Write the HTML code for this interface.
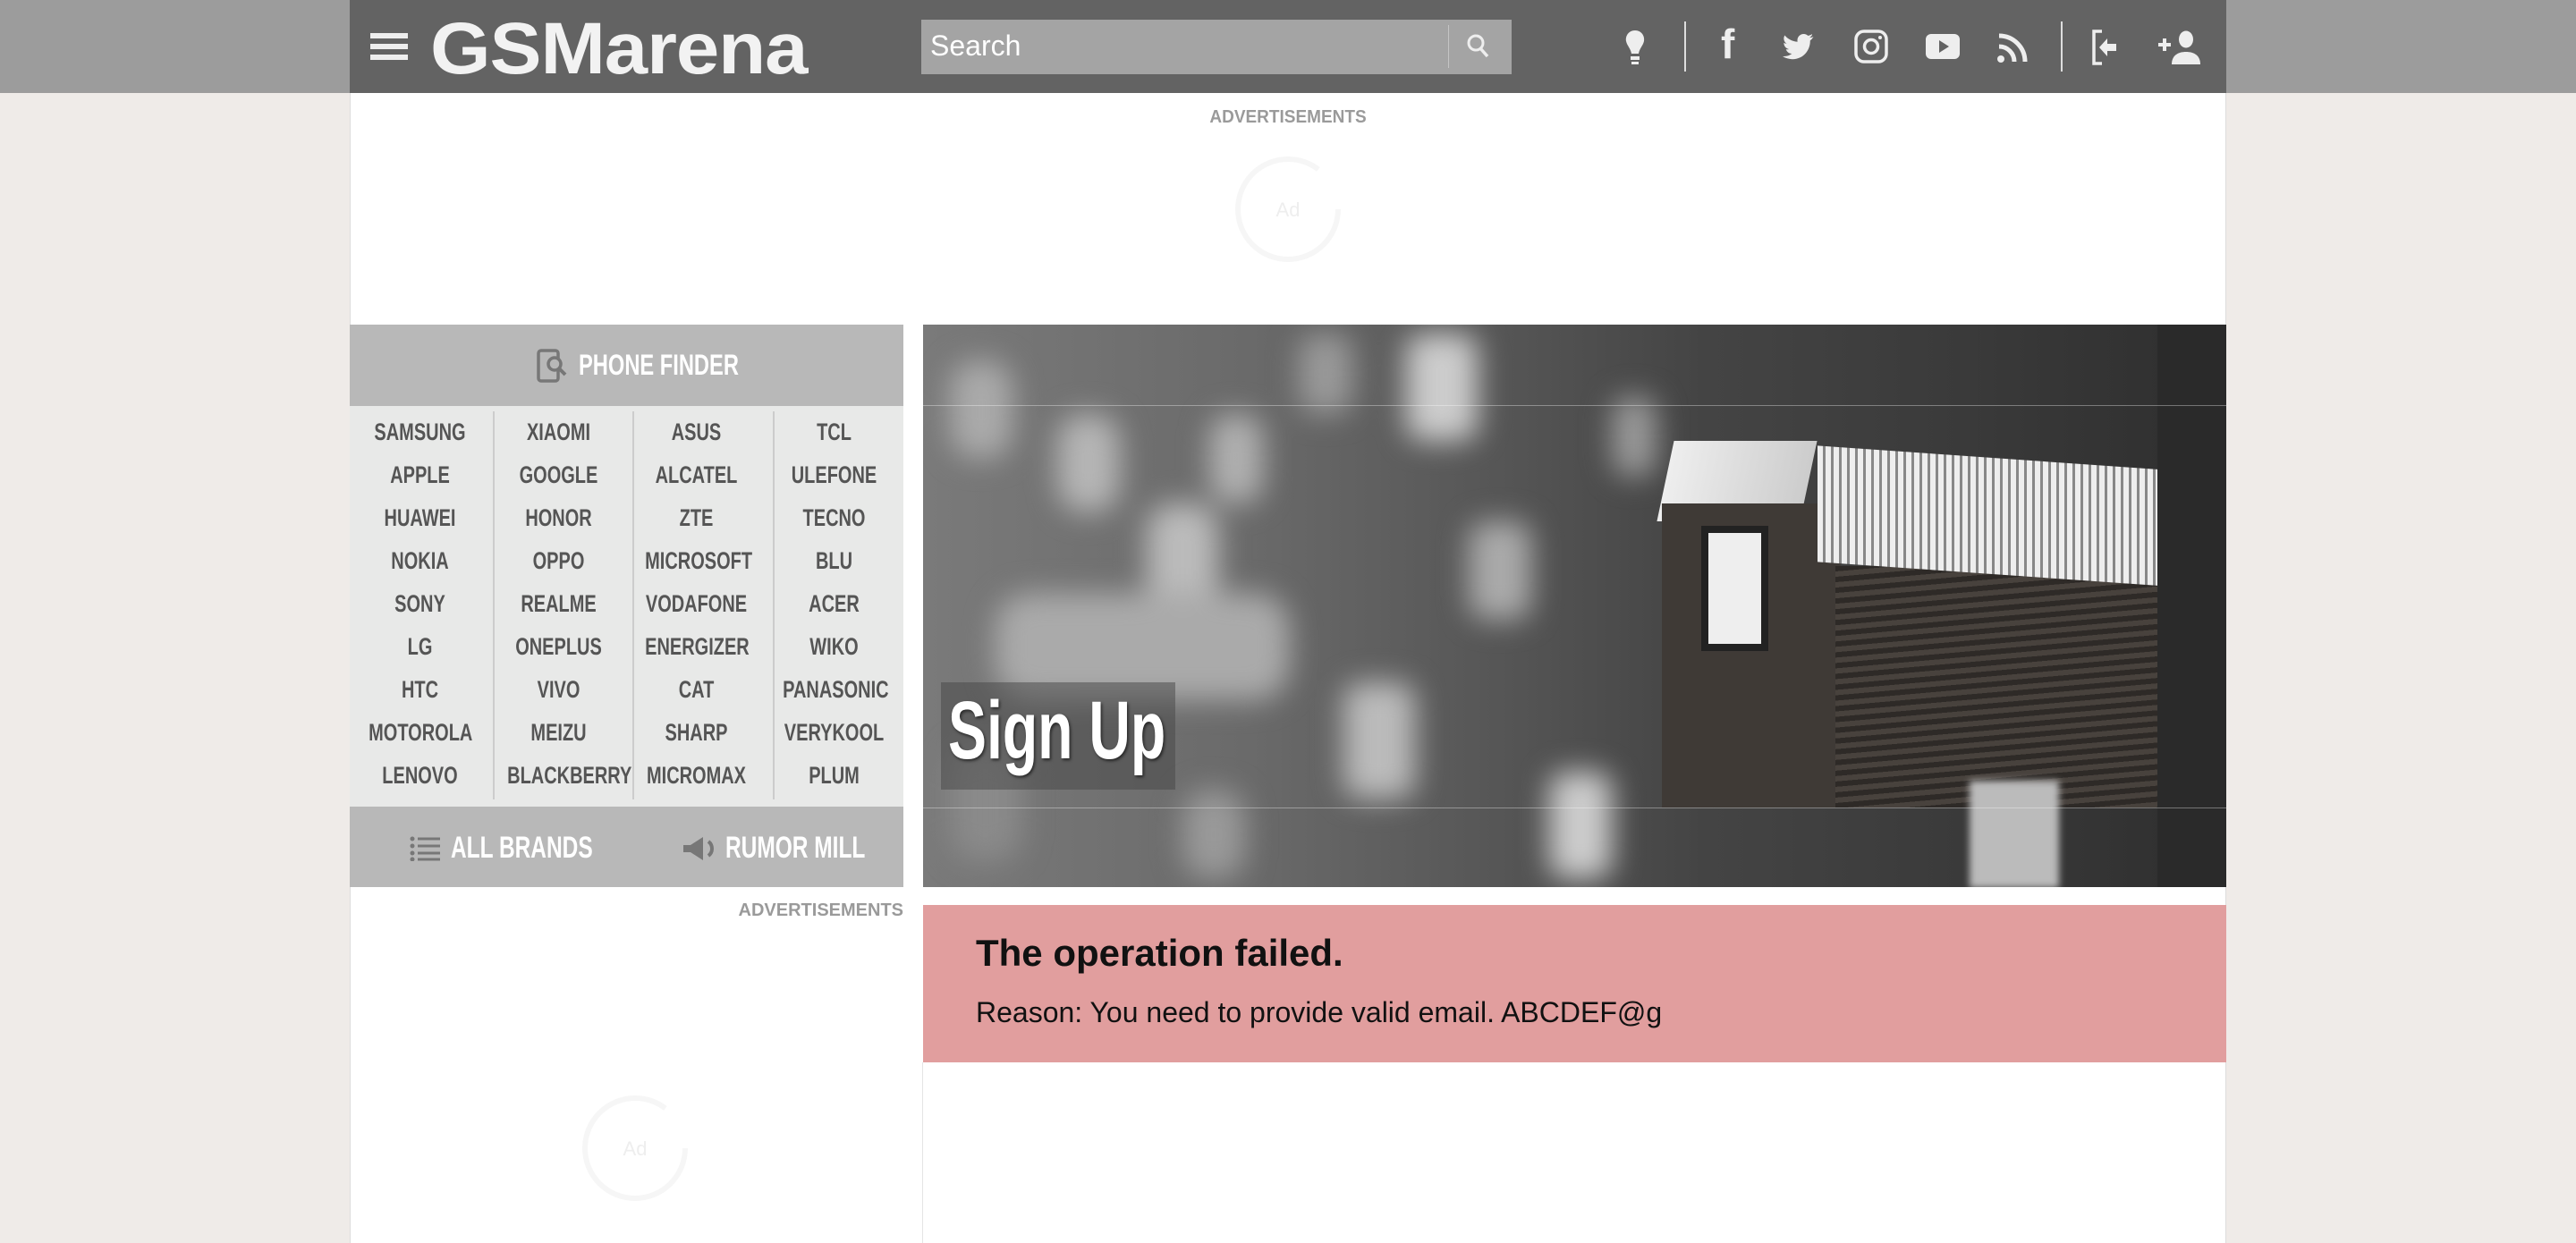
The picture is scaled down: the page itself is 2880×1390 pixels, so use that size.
<!DOCTYPE html>
<html><head><meta charset="utf-8">
<style>
*{margin:0;padding:0;box-sizing:border-box}
body{width:2880px;height:1390px;background:#efebe8;font-family:"Liberation Sans",sans-serif;position:relative;overflow:hidden}
.topbar{position:absolute;left:0;top:0;width:2880px;height:104px;background:#9c9c9c}
.hdr{position:absolute;left:391px;top:0;width:2098px;height:104px;background:#636363}
.col{position:absolute;left:391px;top:104px;width:2098px;height:1286px;background:#fff;border-left:1px solid #ddd;border-right:1px solid #ddd}
.abs{position:absolute}
.cond{font-family:"Liberation Sans",sans-serif;font-weight:bold}
.adl{font-size:20px;font-weight:bold;color:#9a9a9a;letter-spacing:0}
.brand{position:absolute;width:155px;text-align:center;font-size:27px;font-weight:bold;color:#555;transform:scaleX(.74)}
</style></head><body>
<div class="topbar"></div>
<div class="hdr">
  <div class="abs" style="left:23px;top:37px;width:42px;height:6px;background:#eee"></div>
  <div class="abs" style="left:23px;top:49px;width:42px;height:6px;background:#eee"></div>
  <div class="abs" style="left:23px;top:61px;width:42px;height:6px;background:#eee"></div>
  <div class="abs" style="left:90px;top:10px;font-size:82px;font-weight:bold;color:#f2f2f2;letter-spacing:-1px;transform:scaleX(1.06);transform-origin:left;line-height:90px">GSMarena</div>
  <div class="abs" style="left:639px;top:22px;width:660px;height:61px;background:#a4a4a4"></div>
  <div class="abs" style="left:649px;top:33px;font-size:32px;color:#fff">Search</div>
  <div class="abs" style="left:1228px;top:28px;width:1px;height:48px;background:#c5c5c5"></div>
  <svg class="abs" style="left:1246px;top:36px" width="32" height="32" viewBox="0 0 32 32"><circle cx="13" cy="12" r="8" stroke="#eee" stroke-width="3" fill="none"/><path d="M18 18l8 9" stroke="#eee" stroke-width="3.5"/></svg>
  <svg class="abs" style="left:1422px;top:32px" width="30" height="42" viewBox="0 0 30 42"><path d="M15 2c7 0 11 6 10 12-1 5-5 8-6 14H11C10 22 6 19 5 14 4 8 8 2 15 2z" fill="#eee"/><rect x="10" y="31" width="10" height="4" fill="#eee"/><rect x="11" y="37" width="8" height="3" fill="#eee"/></svg>
  <div class="abs" style="left:1492px;top:24px;width:2px;height:56px;background:#ddd"></div>
  <div class="abs" style="left:1533px;top:22px;font-size:46px;font-weight:bold;color:#eee">f</div>
  <svg class="abs" style="left:1602px;top:37px" width="36" height="32" viewBox="0 0 24 20"><path d="M23 2c-1 .5-2 .7-3 .8 1-.6 2-1.6 2-2.7-1 .6-2 1-3 1.2C18 .4 16.9 0 15.7 0 13.1 0 11 2.1 11 4.7c0 .4 0 .7.1 1.1C7.3 5.6 3.8 3.8 1.6 1 1.2 1.7.9 2.5.9 3.3c0 1.7.9 3.1 2.1 3.9-.8 0-1.5-.2-2.1-.6v.1c0 2.3 1.6 4.2 3.8 4.6-.4.1-.8.2-1.3.2-.3 0-.6 0-.9-.1.6 1.9 2.3 3.2 4.4 3.3C5.3 16 3.2 16.7 1 16.7H0c2.1 1.3 4.5 2.1 7.2 2.1 8.6 0 13.3-7.1 13.3-13.3v-.6C21.4 4.2 22.3 3.2 23 2z" fill="#eee"/></svg>
  <svg class="abs" style="left:1682px;top:33px" width="38" height="38" viewBox="0 0 38 38"><rect x="2" y="2" width="34" height="34" rx="9" stroke="#eee" stroke-width="3.5" fill="none"/><circle cx="19" cy="19" r="7.5" stroke="#eee" stroke-width="3.5" fill="none"/><circle cx="29" cy="9" r="2" fill="#eee"/></svg>
  <svg class="abs" style="left:1762px;top:38px" width="40" height="30" viewBox="0 0 40 30"><rect x="0" y="0" width="38" height="28" rx="6" fill="#eee"/><path d="M15 7v14l11-7z" fill="#636363"/></svg>
  <svg class="abs" style="left:1842px;top:35px" width="36" height="36" viewBox="0 0 36 36"><circle cx="4" cy="31" r="4" fill="#eee"/><path d="M2 17a17 17 0 0 1 17 17M2 5a29 29 0 0 1 29 29" stroke="#eee" stroke-width="5" fill="none"/></svg>
  <div class="abs" style="left:1913px;top:24px;width:2px;height:56px;background:#ddd"></div>
  <svg class="abs" style="left:1946px;top:33px" width="36" height="40" viewBox="0 0 36 40"><path d="M13 2H4v36h9" stroke="#eee" stroke-width="3.5" fill="none"/><path d="M10 20l9-10v6h10v8H19v6z" fill="#eee"/></svg>
  <svg class="abs" style="left:2020px;top:34px" width="50" height="38" viewBox="0 0 50 38"><path d="M2 16h14M9 9v14" stroke="#eee" stroke-width="4"/><ellipse cx="33" cy="10" rx="8" ry="9.5" fill="#eee"/><path d="M17 38c0-10 7-14 16-14s16 4 16 14z" fill="#eee"/></svg>
</div>
<div class="col"></div>
<div class="abs adl" style="left:1340px;top:120px;width:200px;text-align:center;transform:scaleX(.95)">ADVERTISEMENTS</div>
<svg class="abs" style="left:1380px;top:172px" width="120" height="124"><circle cx="60" cy="62" r="56" stroke="#f6f6f6" stroke-width="6" fill="none" stroke-dasharray="300 60"/><text x="60" y="70" font-size="22" fill="#eee" text-anchor="middle" font-family="Liberation Sans">Ad</text></svg>
<div class="abs" style="left:391px;top:363px;width:619px;height:91px;background:#b8b8b8"></div>
<svg class="abs" style="left:600px;top:390px" width="36" height="38" viewBox="0 0 36 38"><rect x="2" y="2" width="22" height="34" rx="3" stroke="#777" stroke-width="3.5" fill="none"/><circle cx="20" cy="17" r="7" stroke="#777" stroke-width="3.5" fill="#b8b8b8"/><path d="M25 22l7 7" stroke="#777" stroke-width="4"/></svg>
<div class="abs cond" style="left:647px;top:390px;font-size:32px;color:#fff;transform:scaleX(.74);transform-origin:left">PHONE FINDER</div>
<div class="abs" style="left:391px;top:454px;width:619px;height:448px;background:#e8e9e8"></div>
<div class="abs" style="left:551px;top:460px;width:2px;height:434px;background:#ccc"></div>
<div class="abs" style="left:707px;top:460px;width:2px;height:434px;background:#ccc"></div>
<div class="abs" style="left:864px;top:460px;width:2px;height:434px;background:#ccc"></div>
<div class="brand" style="left:392px;top:468px">SAMSUNG</div><div class="brand" style="left:392px;top:516px">APPLE</div><div class="brand" style="left:392px;top:564px">HUAWEI</div><div class="brand" style="left:392px;top:612px">NOKIA</div><div class="brand" style="left:392px;top:660px">SONY</div><div class="brand" style="left:392px;top:708px">LG</div><div class="brand" style="left:392px;top:756px">HTC</div><div class="brand" style="left:392px;top:804px">MOTOROLA</div><div class="brand" style="left:392px;top:852px">LENOVO</div>
<div class="brand" style="left:547px;top:468px">XIAOMI</div><div class="brand" style="left:547px;top:516px">GOOGLE</div><div class="brand" style="left:547px;top:564px">HONOR</div><div class="brand" style="left:547px;top:612px">OPPO</div><div class="brand" style="left:547px;top:660px">REALME</div><div class="brand" style="left:547px;top:708px">ONEPLUS</div><div class="brand" style="left:547px;top:756px">VIVO</div><div class="brand" style="left:547px;top:804px">MEIZU</div><div class="brand" style="left:547px;top:852px">BLACKBERRY</div>
<div class="brand" style="left:701px;top:468px">ASUS</div><div class="brand" style="left:701px;top:516px">ALCATEL</div><div class="brand" style="left:701px;top:564px">ZTE</div><div class="brand" style="left:701px;top:612px">MICROSOFT</div><div class="brand" style="left:701px;top:660px">VODAFONE</div><div class="brand" style="left:701px;top:708px">ENERGIZER</div><div class="brand" style="left:701px;top:756px">CAT</div><div class="brand" style="left:701px;top:804px">SHARP</div><div class="brand" style="left:701px;top:852px">MICROMAX</div>
<div class="brand" style="left:855px;top:468px">TCL</div><div class="brand" style="left:855px;top:516px">ULEFONE</div><div class="brand" style="left:855px;top:564px">TECNO</div><div class="brand" style="left:855px;top:612px">BLU</div><div class="brand" style="left:855px;top:660px">ACER</div><div class="brand" style="left:855px;top:708px">WIKO</div><div class="brand" style="left:855px;top:756px">PANASONIC</div><div class="brand" style="left:855px;top:804px">VERYKOOL</div><div class="brand" style="left:855px;top:852px">PLUM</div>
<div class="abs" style="left:391px;top:902px;width:619px;height:90px;background:#b8b8b8"></div>
<svg class="abs" style="left:458px;top:935px" width="34" height="28" viewBox="0 0 34 28"><g fill="#777"><circle cx="3" cy="3" r="2.5"/><circle cx="3" cy="11" r="2.5"/><circle cx="3" cy="19" r="2.5"/><circle cx="3" cy="26" r="2.5"/><rect x="9" y="1.5" width="25" height="3"/><rect x="9" y="9.5" width="25" height="3"/><rect x="9" y="17.5" width="25" height="3"/><rect x="9" y="24.5" width="25" height="3"/></g></svg>
<div class="abs cond" style="left:504px;top:929px;font-size:34px;color:#fff;transform:scaleX(.72);transform-origin:left">ALL BRANDS</div>
<svg class="abs" style="left:762px;top:934px" width="40" height="30" viewBox="0 0 40 30"><path d="M2 11h8l14-9v26L10 19H2z" fill="#777"/><path d="M30 7a10 10 0 0 1 0 16" stroke="#777" stroke-width="4" fill="none"/></svg>
<div class="abs cond" style="left:811px;top:929px;font-size:34px;color:#fff;transform:scaleX(.72);transform-origin:left">RUMOR MILL</div>
<div class="abs adl" style="left:760px;top:1007px;width:250px;text-align:right">ADVERTISEMENTS</div>
<svg class="abs" style="left:650px;top:1222px" width="120" height="124"><circle cx="60" cy="62" r="56" stroke="#f6f6f6" stroke-width="6" fill="none" stroke-dasharray="300 60"/><text x="60" y="70" font-size="22" fill="#eee" text-anchor="middle" font-family="Liberation Sans">Ad</text></svg>
<div class="abs" style="left:1031px;top:1188px;width:1px;height:202px;background:#e4e4e4"></div>
<div class="abs" style="left:1032px;top:363px;width:1457px;height:629px;overflow:hidden;background:linear-gradient(90deg,#7a7a7a 0%,#6a6a6a 25%,#555 45%,#444 60%,#3a3a3a 80%,#2e2e2e 100%)">
  <div class="abs" style="left:0;top:0;width:820px;height:629px;filter:blur(16px)">
    <div class="abs" style="left:30px;top:40px;width:70px;height:110px;background:#aaa;border-radius:30px"></div>
    <div class="abs" style="left:150px;top:100px;width:70px;height:110px;background:#b5b5b5;border-radius:30px"></div>
    <div class="abs" style="left:250px;top:200px;width:80px;height:120px;background:#bbb;border-radius:30px"></div>
    <div class="abs" style="left:80px;top:300px;width:330px;height:120px;background:#aaa;border-radius:40px"></div>
    <div class="abs" style="left:320px;top:100px;width:60px;height:100px;background:#b0b0b0;border-radius:25px"></div>
    <div class="abs" style="left:540px;top:10px;width:80px;height:120px;background:#ccc;border-radius:20px"></div>
    <div class="abs" style="left:420px;top:10px;width:60px;height:90px;background:#999;border-radius:20px"></div>
    <div class="abs" style="left:470px;top:400px;width:80px;height:130px;background:#bbb;border-radius:20px"></div>
    <div class="abs" style="left:700px;top:500px;width:70px;height:120px;background:#ccc;border-radius:20px"></div>
    <div class="abs" style="left:610px;top:220px;width:70px;height:110px;background:#aaa;border-radius:20px"></div>
    <div class="abs" style="left:30px;top:470px;width:80px;height:130px;background:#8a8a8a;border-radius:30px"></div>
    <div class="abs" style="left:290px;top:520px;width:70px;height:100px;background:#999;border-radius:30px"></div>
    <div class="abs" style="left:770px;top:80px;width:50px;height:90px;background:#999;border-radius:20px"></div>
  </div>
  <div class="abs" style="left:830px;top:130px;width:160px;height:90px;background:linear-gradient(90deg,#eee,#ccc);transform:skewX(-12deg)"></div>
  <div class="abs" style="left:826px;top:200px;width:200px;height:340px;background:#3f3a36"></div>
  <div class="abs" style="left:1020px;top:270px;width:420px;height:270px;background:repeating-linear-gradient(175deg,#2e2a27 0 6px,#48423d 6px 12px)"></div>
  <div class="abs" style="left:1000px;top:150px;width:420px;height:130px;background:repeating-linear-gradient(90deg,#eee 0 6px,#888 6px 9px);transform:skewY(4deg)"></div>
  <div class="abs" style="left:870px;top:225px;width:75px;height:140px;background:#eee;border:8px solid #222"></div>
  <div class="abs" style="left:1170px;top:510px;width:100px;height:120px;background:#bbb;filter:blur(4px)"></div>
  <div class="abs" style="left:1380px;top:0;width:77px;height:629px;background:#2a2a2a"></div>
  <div class="abs" style="left:0;top:90px;width:1457px;height:1px;background:rgba(255,255,255,.35)"></div>
  <div class="abs" style="left:0;top:540px;width:1457px;height:1px;background:rgba(255,255,255,.35)"></div>
  <div class="abs" style="left:20px;top:400px;width:262px;height:120px;background:rgba(70,70,70,.5)"></div>
  <div class="abs cond" style="left:28px;top:402px;font-size:92px;color:#fff;transform:scaleX(.7);transform-origin:left;text-shadow:2px 2px 4px rgba(0,0,0,.6)">Sign Up</div>
</div>
<div class="abs" style="left:1032px;top:1012px;width:1457px;height:176px;background:#e19e9e"></div>
<div class="abs" style="left:1091px;top:1042px;font-size:42px;font-weight:bold;color:#111">The operation failed.</div>
<div class="abs" style="left:1091px;top:1114px;font-size:32px;color:#111">Reason: You need to provide valid email. ABCDEF@g</div>
</body></html>
